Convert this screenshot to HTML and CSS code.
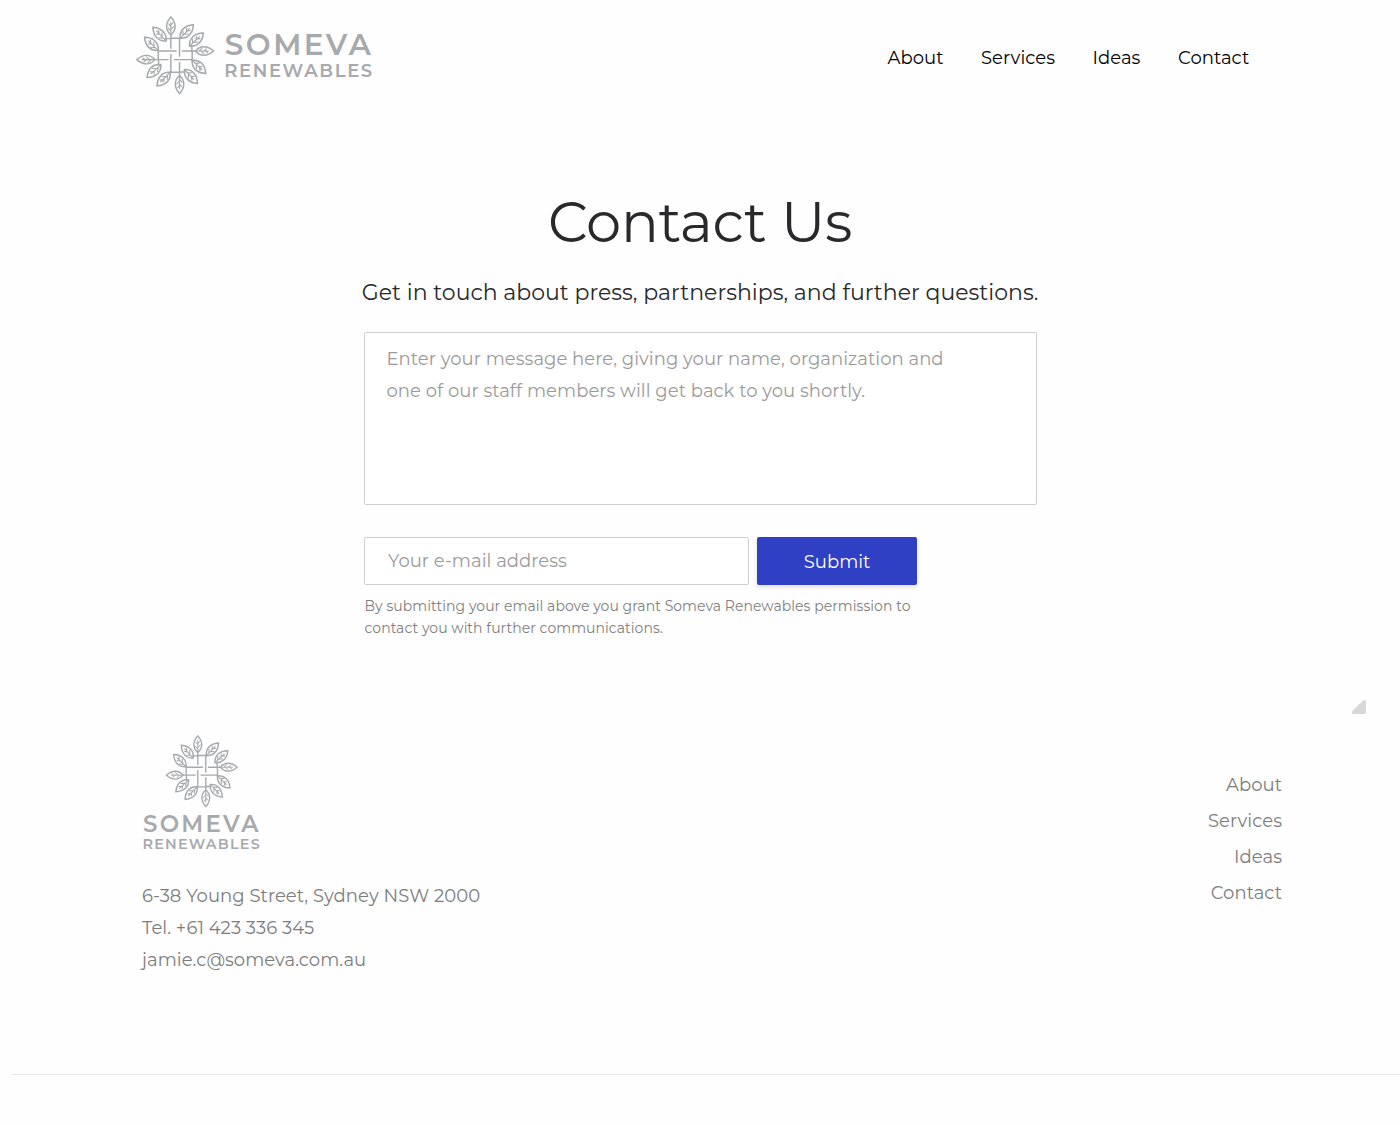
FILE: index.html
```
<!DOCTYPE html>
<html lang="en">
<head>
<meta charset="utf-8">
<title>Contact Us – Someva Renewables</title>
<link rel="stylesheet" href="styles.css">
</head>
<body>
<svg class="defs" aria-hidden="true">
  <defs>
    <g id="leaf">
      <path d="M0 0C-17 -14 -17 -35 0 -54C17 -35 17 -14 0 0Z"/>
      <path stroke-width="3.2" d="M0 0V-40M0 -11L-9 -21M0 -25L-7 -34M0 -16L9 -26M0 -29L6 -37"/>
    </g>
    <g id="branch">
      <use href="#leaf" x="-13" y="-61"/>
      <path d="M-13 -61V-20M-13 -51H15M13 -51V4M13 -49L17 -52M43 -28H50V-13"/>
      <use href="#leaf" transform="translate(15 -51) rotate(44) scale(1.05)"/>
      <use href="#leaf" transform="translate(43 -28) rotate(47) scale(1.05)"/>
    </g>
    <g id="mark" fill="none" stroke="#a7a9ac" stroke-width="4.4">
      <use href="#branch"/>
      <use href="#branch" transform="rotate(90)"/>
      <use href="#branch" transform="rotate(180)"/>
      <use href="#branch" transform="rotate(270)"/>
    </g>
  </defs>
</svg>

<header class="header">
  <a class="logo" aria-label="Someva Renewables">
    <svg width="240" height="80" viewBox="0 0 240 80">
      <use href="#mark" transform="translate(39.2 40.3) scale(.3333)"/>
      <text class="logo-text" x="88.8" y="40.3" font-size="29.5" textLength="146">SOMEVA</text>
      <text class="logo-text" x="88.2" y="61.9" font-size="18" textLength="148">RENEWABLES</text>
    </svg>
  </a>
  <nav class="nav">
    <a>About</a>
    <a>Services</a>
    <a>Ideas</a>
    <a>Contact</a>
  </nav>
</header>

<main class="main">
  <h1 class="title">Contact Us</h1>
  <p class="lead">Get in touch about press, partnerships, and further questions.</p>
  <form class="form">
    <textarea class="message" placeholder="Enter your message here, giving your name, organization and&#10;one of our staff members will get back to you shortly."></textarea>
    <div class="row">
      <input class="email" type="text" placeholder="Your e-mail address">
      <button class="submit" type="button">Submit</button>
    </div>
    <p class="note">By submitting your email above you grant Someva Renewables permission to<br>contact you with further communications.</p>
  </form>
  <svg class="corner" width="14" height="14" viewBox="0 0 14 14"><path d="M.4 11L11 .4Q12.4-.4 14 .6V12.6Q14 14 12.6 14H1.2Q-.8 13 .4 11Z" fill="#d8d8d8"/></svg>
</main>

<footer class="footer">
  <div>
    <svg class="footer-logo" width="122" height="120" viewBox="0 0 122 120">
      <use href="#mark" transform="translate(59.8 36.2) scale(.307)"/>
      <text class="logo-text" x=".9" y="96.8" font-size="23" textLength="115.6">SOMEVA</text>
      <text class="logo-text" x=".4" y="114" font-size="14.4" textLength="117.4">RENEWABLES</text>
    </svg>
    <address class="address">
      <span>6-38 Young Street, Sydney NSW 2000</span>
      <span>Tel. +61 423 336 345</span>
      <span>jamie.c@someva.com.au</span>
    </address>
  </div>
  <nav class="footer-nav">
    <a>About</a>
    <a>Services</a>
    <a>Ideas</a>
    <a>Contact</a>
  </nav>
</footer>
<hr class="divider">
</body>
</html>
```
FILE: styles.css
```
* { box-sizing: border-box; }

body {
  margin: 0;
  min-height: 1125px;
  background: #fefefe;
  font-family: Montserrat, Inter, "Open Sans", sans-serif;
  font-size: 18px;
  font-weight: 400;
  line-height: 32px;
  letter-spacing: .05px;
}

.defs { position: absolute; width: 0; height: 0; }

.header {
  display: flex;
  justify-content: space-between;
  height: 111px;
  padding: 15px 150px 0 136px;
}
.logo svg { display: block; }
.logo-text { fill: #a7a9ac; font-weight: 650; letter-spacing: 0; }

.nav {
  display: grid;
  grid-template-columns: 93.5px 111.5px 85.5px 72px;
  align-self: flex-start;
  padding-top: 27px;
  color: #000;
}

.main {
  display: flex;
  flex-direction: column;
  align-items: center;
  padding-top: 79px;
}
.title {
  margin: 0;
  font-size: 56px;
  font-weight: 390;
  line-height: 64px;
  letter-spacing: -.3px;
  color: #29292c;
}
.lead {
  margin: 23px 0;
  font-size: 22px;
  letter-spacing: .01px;
  white-space: nowrap;
  color: #29292c;
}

.form { width: 673px; }
.message, .email {
  display: block;
  border: 1px solid #cfcfcf;
  border-radius: 2px;
  background: #fff;
  font: inherit;
  letter-spacing: .04px;
  outline: none;
}
.message {
  width: 100%;
  height: 173px;
  padding: 10px 22px;
  resize: none;
  overflow: hidden;
}
.email {
  width: 385px;
  height: 48px;
  padding: 0 23.5px;
}
.message::placeholder, .email::placeholder { color: #9b9b9b; opacity: 1; }

.row { display: flex; gap: 8px; margin-top: 32px; }
.submit {
  width: 160px;
  height: 48px;
  padding: 1px 0 0 1px;
  border: 0;
  border-radius: 2px;
  background: #3040c4;
  box-shadow: 0 2px 4px rgba(0, 0, 0, .14);
  color: #fff;
  font: inherit;
}
.note {
  margin: 10px 0 0 1px;
  font-size: 14px;
  line-height: 22px;
  color: #808080;
}
.corner { align-self: flex-end; margin: 61px 34px 0 0; }

.footer {
  display: flex;
  justify-content: space-between;
  height: 360px;
  padding: 21px 118px 0 142px;
  color: #7d7d7d;
}
.footer-logo { display: block; }
.address {
  display: flex;
  flex-direction: column;
  margin-top: 25px;
  font-style: normal;
}

.footer-nav {
  display: flex;
  flex-direction: column;
  align-items: flex-end;
  padding-top: 32px;
  line-height: 36px;
}

.divider {
  height: 1px;
  margin: 0 0 0 12px;
  border: 0;
  background: #e6e6e6;
}
```
